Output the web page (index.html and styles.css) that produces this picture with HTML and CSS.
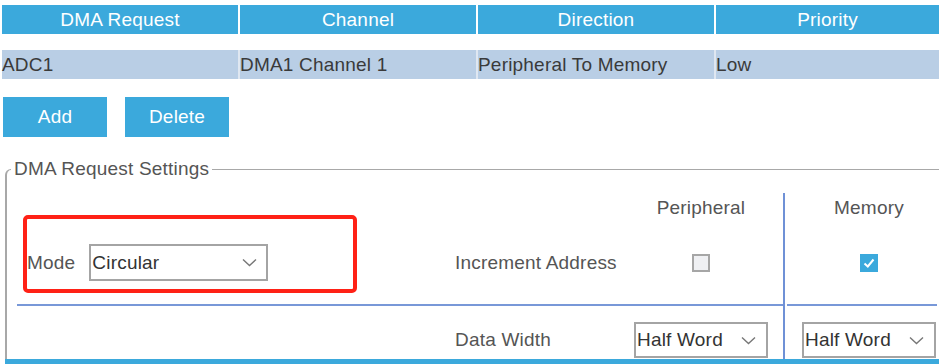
FILE: index.html
```html
<!DOCTYPE html>
<html lang="en">
<head>
  <meta charset="UTF-8">
  <title>DMA Settings</title>
  <link rel="stylesheet" href="styles.css">
</head>
<body>

  <div class="dma-table">
    <div class="head-cell">DMA Request</div>
    <div class="head-cell">Channel</div>
    <div class="head-cell">Direction</div>
    <div class="head-cell">Priority</div>
  </div>

  <div class="dma-row">
    <div class="row-cell">ADC1</div>
    <div class="row-cell">DMA1 Channel 1</div>
    <div class="row-cell">Peripheral To Memory</div>
    <div class="row-cell">Low</div>
  </div>

  <div class="actions">
    <button class="btn">Add</button>
    <button class="btn">Delete</button>
  </div>

  <fieldset class="settings">
    <legend>DMA Request Settings</legend>

    <div class="settings-grid">
      <div class="col-title col-periph">Peripheral</div>
      <div class="col-title col-mem">Memory</div>
      <div class="divider"></div>

      <!-- highlighted mode box -->
      <div class="mode-box">
        <span class="label mode-label">Mode</span>
        <div class="select select-mode">
          <span>Circular</span>
          <svg width="15" height="9" viewBox="0 0 15 9"><path d="M1 1.5 L7.5 7.5 L14 1.5" fill="none" stroke="#777" stroke-width="1.4"/></svg>
        </div>
      </div>

      <div class="label row-label inc-label">Increment Address</div>
      <div class="check col-periph"></div>
      <div class="check checked col-mem">
        <svg width="18" height="18" viewBox="0 0 18 18"><path d="M4.5 9.5 L7.8 12.5 L13.5 5.5" fill="none" stroke="#fff" stroke-width="2"/></svg>
      </div>

      <div class="hline hline-left"></div>
      <div class="hline hline-right"></div>

      <div class="label row-label width-label">Data Width</div>
      <div class="select select-small col-periph">
        <span>Half Word</span>
        <svg width="15" height="9" viewBox="0 0 15 9"><path d="M1 1.5 L7.5 7.5 L14 1.5" fill="none" stroke="#777" stroke-width="1.4"/></svg>
      </div>
      <div class="select select-small col-mem">
        <span>Half Word</span>
        <svg width="15" height="9" viewBox="0 0 15 9"><path d="M1 1.5 L7.5 7.5 L14 1.5" fill="none" stroke="#777" stroke-width="1.4"/></svg>
      </div>
    </div>
  </fieldset>

  <div class="bottom-bar"></div>

</body>
</html>
```

FILE: styles.css
```css
body {
  margin: 0;
  font-family: "Liberation Sans", Arial, sans-serif;
  font-size: 19px;
  letter-spacing: 0.2px;
  color: #555;
  background: #fff;
  overflow: hidden;
}

.dma-table {
  display: grid;
  grid-template-columns: 236px 236px 236px 1fr;
  gap: 2px;
  margin: 5px 0 0 2px;
}

.head-cell {
  height: 29px;
  line-height: 29px;
  background: #3ba9dc;
  color: #fff;
  text-align: center;
}

.dma-row {
  display: grid;
  grid-template-columns: 236px 236px 236px 1fr;
  gap: 2px;
  margin: 16px 0 0 2px;
  background: #dfe7f1;
}

.row-cell {
  height: 29px;
  line-height: 29px;
  background: #b9cee5;
  color: #3a3a3a;
}

.actions {
  display: flex;
  gap: 18px;
  margin: 18px 0 0 3px;
}

.btn {
  width: 104px;
  height: 40px;
  border: none;
  background: #3ba9dc;
  color: #fff;
  font-family: inherit;
  font-size: 19px;
  letter-spacing: 0.2px;
  padding: 0;
}

.settings {
  margin: 21px 0 0 5px;
  padding: 0;
  min-width: 0;
  border: 2px solid #a8a8a8;
  border-right: 0;
  border-bottom: 0;
  border-top-width: 1px;
  border-top-left-radius: 6px;
}

.settings legend {
  padding: 0 3px;
  margin-left: 4px;
  line-height: 22px;
  color: #555;
}

.settings-grid {
  display: grid;
  grid-template-columns: 438px 164px 164px 4px 164px;
  grid-template-rows: 29px 82px 2px 53px;
  padding: 13px 0 0 10px;
}

.col-title {
  grid-row: 1;
  line-height: 29px;
  text-align: center;
}

.col-periph { grid-column: 3; }
.col-mem { grid-column: 5; }

.divider {
  grid-column: 4;
  grid-row: 1 / -1;
  width: 2px;
  background: #6f91d6;
}

.mode-box {
  grid-column: 1;
  grid-row: 1 / 3;
  align-self: end;
  margin: 0 0 11px 6px;
  width: 334px;
  height: 78px;
  box-sizing: border-box;
  border: 4px solid #ff2116;
  border-radius: 5px;
  display: flex;
  align-items: flex-end;
  gap: 14px;
  padding-bottom: 8px;
}

.mode-label {
  line-height: 37px;
}

.row-label {
  grid-column: 2;
}

.inc-label {
  grid-row: 2;
  align-self: center;
}

.width-label {
  grid-row: 4;
  align-self: end;
  line-height: 36px;
  margin-bottom: 1px;
}

.select {
  display: flex;
  align-items: center;
  justify-content: space-between;
  box-sizing: border-box;
  border: 2px solid #a4a4a4;
  color: #333;
  background: #fff;
  padding: 0 9px 0 1px;
}

.select-mode {
  width: 179px;
  height: 37px;
}

.select-small {
  grid-row: 4;
  align-self: end;
  justify-self: start;
  width: 134px;
  height: 36px;
  margin: 0 0 1px 15px;
  padding-right: 10px;
}

.check {
  grid-row: 2;
  align-self: center;
  justify-self: start;
  margin-left: 73px;
  width: 18px;
  height: 18px;
  box-sizing: border-box;
  border: 2px solid #a6a6a6;
  background: #eff0f3;
}

.check.checked {
  border: none;
  background: #3ba9dc;
}

.check svg {
  display: block;
}

.hline {
  grid-row: 3;
  height: 2px;
  background: #7898d8;
}

.hline-left {
  grid-column: 1 / 4;
}

.hline-right {
  grid-column: 5;
  margin-right: 14px;
}

.bottom-bar {
  margin-left: 5px;
  height: 10px;
  background: #3ba9dc;
}
```
